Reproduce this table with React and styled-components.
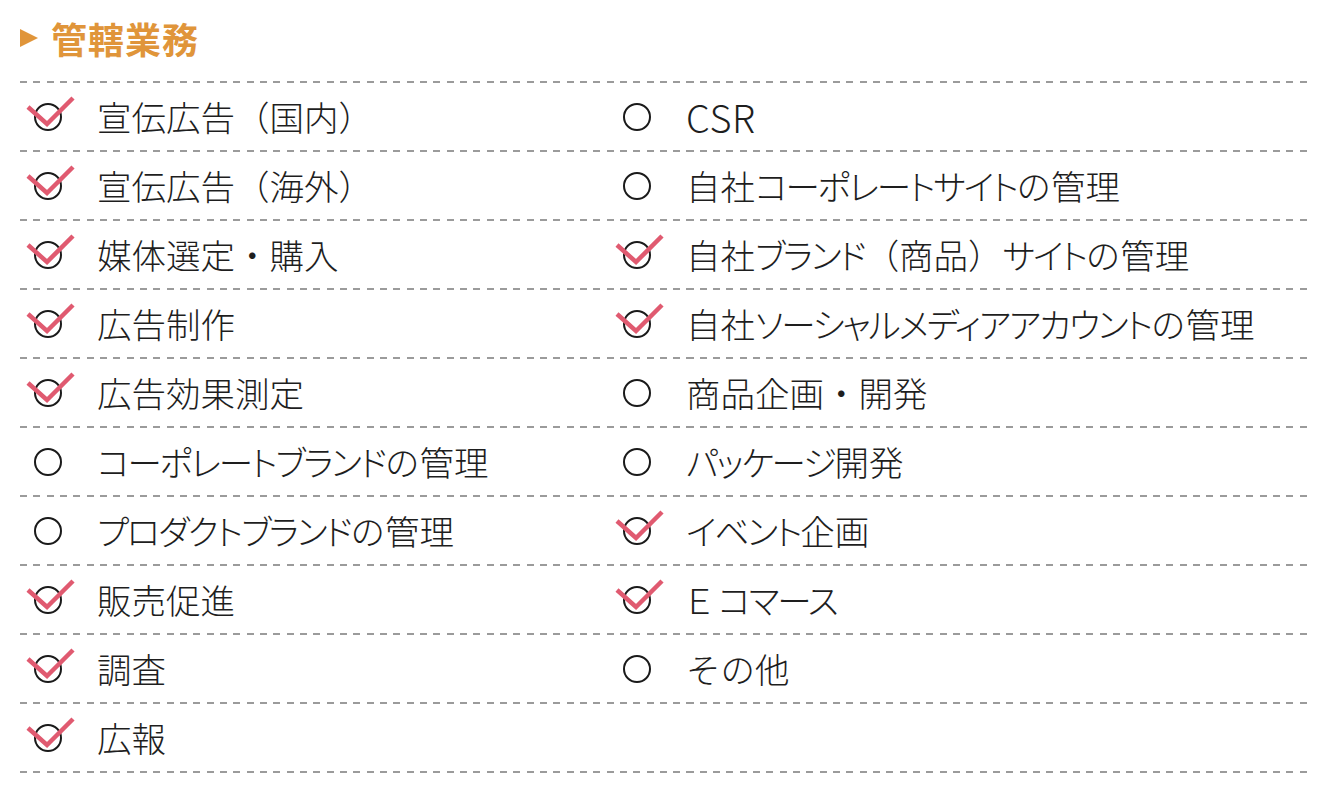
import React from "react";
import styled, { createGlobalStyle } from "styled-components";

const Global = createGlobalStyle`
  html, body { margin: 0; padding: 0; background: #fff; }
  body { font-family: "Noto Sans CJK JP", "Noto Sans", sans-serif; color: #222; }
`;

const Page = styled.div`
  width: 1330px;
  padding: 0 20px;
  box-sizing: border-box;
`;

const Heading = styled.h2`
  margin: 0;
  height: 81px;
  display: flex;
  align-items: center;
  gap: 13px;
  padding-bottom: 6px;
  box-sizing: border-box;
  font-size: 36px;
  font-weight: 700;
  letter-spacing: 1px;
  color: #e0953a;
  line-height: 1;
`;

const Triangle = styled.span`
  width: 0;
  height: 0;
  border-left: 18px solid #e0953a;
  border-top: 9px solid transparent;
  border-bottom: 9px solid transparent;
`;

const Dash = styled.div`
  height: 2px;
  background: repeating-linear-gradient(
    to right,
    #9b9b9b 0 7px,
    transparent 7px 13.33px
  );
`;

const List = styled.div`
  display: flex;
  flex-direction: column;
`;

const Row = styled.div`
  display: grid;
  grid-template-columns: 589px 1fr;
  height: 67px;
`;

const Cell = styled.div`
  display: flex;
  align-items: center;
  padding-left: 2px;
  gap: 23px;
`;

const Label = styled.span`
  font-size: 34.5px;
  font-weight: 300;
  color: #1e1e1e;
  white-space: nowrap;
  line-height: 1;
`;

const Kana = styled.span`
  font-feature-settings: "palt";
  letter-spacing: -2.1px;
`;

const WideLatin = styled.span`
  font-feature-settings: "palt";
  letter-spacing: 6px;
`;

const Latin = styled.span`
  font-size: 1.1em;
  letter-spacing: 0.5px;
`;

const Mark = ({ checked }) => (
  <svg width="52" height="40" viewBox="0 0 52 40" style={{ overflow: "visible", flexShrink: 0 }}>
    <circle cx="26" cy="20" r="13" fill="none" stroke="#1a1a1a" strokeWidth="2" />
    {checked && (
      <polyline
        points="6,10 25,27 51,1"
        fill="none"
        stroke="#e05a70"
        strokeWidth="4.5"
      />
    )}
  </svg>
);

const rows = [
  [["宣伝広告（国内）", true], ["CSR", false]],
  [["宣伝広告（海外）", true], ["自社コーポレートサイトの管理", false]],
  [["媒体選定・購入", true], ["自社ブランド（商品）サイトの管理", true]],
  [["広告制作", true], ["自社ソーシャルメディアアカウントの管理", true]],
  [["広告効果測定", true], ["商品企画・開発", false]],
  [["コーポレートブランドの管理", false], ["パッケージ開発", false]],
  [["プロダクトブランドの管理", false], ["イベント企画", true]],
  [["販売促進", true], ["Ｅコマース", true]],
  [["調査", true], ["その他", false]],
  [["広報", true], null],
];

const SPLIT = /([\u30A1-\u30FA\u30FC]+|[\uFF21-\uFF3A]+|[A-Za-z]+)/;
const isKana = (s) => /^[\u30A1-\u30FA\u30FC]+$/.test(s);
const isWide = (s) => /^[\uFF21-\uFF3A]+$/.test(s);
const isLatin = (s) => /^[A-Za-z]+$/.test(s);

const Text = ({ children }) => (
  <Label>
    {children
      .split(SPLIT)
      .filter(Boolean)
      .map((part, i) =>
        isKana(part) ? (
          <Kana key={i}>{part}</Kana>
        ) : isWide(part) ? (
          <WideLatin key={i}>{part}</WideLatin>
        ) : isLatin(part) ? (
          <Latin key={i}>{part}</Latin>
        ) : (
          <React.Fragment key={i}>{part}</React.Fragment>
        )
      )}
  </Label>
);

const Item = ({ item }) =>
  item ? (
    <Cell>
      <Mark checked={item[1]} />
      <Text>{item[0]}</Text>
    </Cell>
  ) : (
    <Cell />
  );

export default function App() {
  return (
    <Page>
      <Global />
      <Heading>
        <Triangle />
        管轄業務
      </Heading>
      <List>
        <Dash />
        {rows.map((r, i) => (
          <React.Fragment key={i}>
            <Row>
              <Item item={r[0]} />
              <Item item={r[1]} />
            </Row>
            <Dash />
          </React.Fragment>
        ))}
      </List>
    </Page>
  );
}
